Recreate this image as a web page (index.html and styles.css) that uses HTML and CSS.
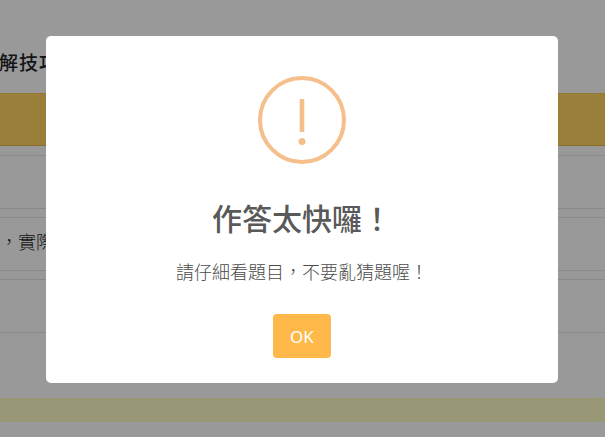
FILE: index.html
```html
<!DOCTYPE html>
<html lang="zh-Hant">
<head>
  <meta charset="UTF-8">
  <meta name="viewport" content="width=device-width, initial-scale=1.0">
  <title>作答太快囉</title>
  <link rel="stylesheet" href="styles.css">
</head>
<body>
  <!-- Page behind the dialog -->
  <div class="page">
    <h2 class="page-title">解技巧</h2>
    <div class="gold-band"></div>
    <div class="option"></div>
    <div class="option option-text">，實際</div>
    <div class="option"></div>
    <div class="olive-band"></div>
  </div>

  <!-- Alert dialog -->
  <div class="overlay">
    <div class="modal">
      <svg class="warning-icon" width="88" height="88" viewBox="0 0 88 88" fill="none">
        <circle cx="44" cy="44" r="42" stroke="#f5bf8b" stroke-width="4"/>
        <rect x="41.7" y="23" width="4.6" height="33" fill="#f5bf8b"/>
        <circle cx="44" cy="65.5" r="3.5" fill="#f5bf8b"/>
      </svg>
      <h1 class="modal-title">作答太快囉！</h1>
      <p class="modal-text">請仔細看題目，不要亂猜題喔！</p>
      <button class="ok-btn">OK</button>
    </div>
  </div>
</body>
</html>
```

FILE: styles.css
```css
* {
  margin: 0;
  padding: 0;
  box-sizing: border-box;
}

html,
body {
  height: 100%;
  overflow: hidden;
}

body {
  font-family: "Liberation Sans", "Noto Sans CJK TC", sans-serif;
  background-color: #fff;
  color: #212529;
}

.page {
  height: 437px;
  overflow: hidden;
}

.page-title {
  height: 93px;
  padding-top: 49px;
  margin-left: -1px;
  font-size: 19px;
  line-height: 30px;
  font-weight: 500;
  letter-spacing: 1px;
}

.gold-band {
  height: 53px;
  margin-bottom: 9px;
  background-color: #ffd461;
  border-top: 1px solid #f5c85a;
  border-bottom: 1px solid #e6b84d;
}

.option {
  height: 54px;
  margin-bottom: 8px;
  border-top: 1px solid #e4e4e4;
  border-bottom: 1px solid #e4e4e4;
}

.option-text {
  font-size: 18px;
  line-height: 50px;
  font-weight: 300;
  white-space: nowrap;
}

.olive-band {
  height: 24px;
  margin-top: 65px;
  background-color: #fdfdc5;
}

.overlay {
  position: fixed;
  inset: 0;
  display: flex;
  justify-content: center;
  align-items: flex-start;
  padding-top: 36px;
  padding-right: 1px;
  background-color: rgba(0, 0, 0, 0.4);
}

.modal {
  width: 512px;
  height: 347px;
  display: flex;
  flex-direction: column;
  align-items: center;
  padding-top: 40px;
  background-color: #fff;
  border-radius: 5px;
}

.modal-title {
  margin-top: 34px;
  font-size: 30px;
  line-height: 44px;
  font-weight: 500;
  color: #595959;
}

.modal-text {
  margin-top: 18px;
  font-size: 18px;
  line-height: 27px;
  font-weight: 300;
  color: #4a4a4a;
}

.ok-btn {
  width: 58px;
  height: 44px;
  margin-top: 27px;
  border: none;
  border-radius: 4px;
  background-color: #ffb94a;
  color: #fff;
  font-family: "Noto Sans", sans-serif;
  font-size: 17px;
}
```
